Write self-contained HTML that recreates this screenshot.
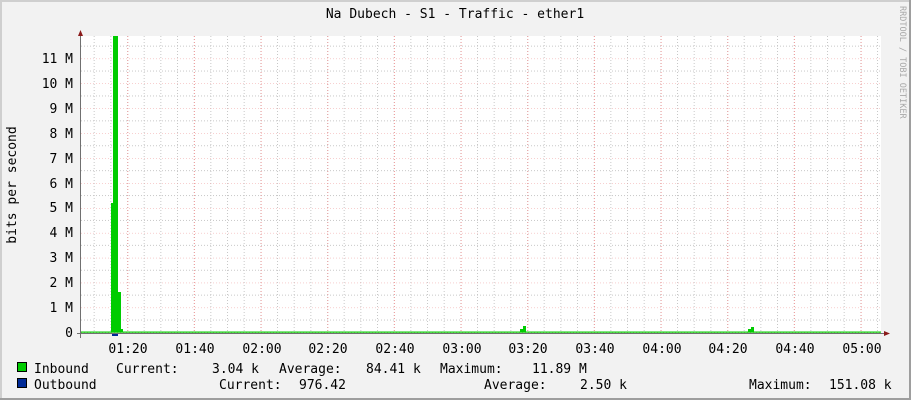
<!DOCTYPE html>
<html><head><meta charset="utf-8"><style>
html,body{margin:0;padding:0;background:#f2f2f2}
svg{display:block}
text{font-family:"DejaVu Sans Mono","Liberation Mono",monospace;font-size:13px;fill:#000}
</style></head><body>
<svg width="911" height="400" xmlns="http://www.w3.org/2000/svg">
<defs>
<pattern id="vg" patternUnits="userSpaceOnUse" x="93.67" y="0" width="16.667" height="400"><line x1="0.5" y1="0" x2="0.5" y2="400" stroke="#c8c8c8" stroke-dasharray="1,2"/></pattern>
<pattern id="vr" patternUnits="userSpaceOnUse" x="127.33" y="0" width="66.667" height="400"><line x1="0.5" y1="0" x2="0.5" y2="400" stroke="#f0a0a0" stroke-dasharray="1,2"/></pattern>
<pattern id="hg" patternUnits="userSpaceOnUse" x="0" y="332.5" width="900" height="24.9"><line x1="0" y1="12.45" x2="900" y2="12.45" stroke="#c8c8c8" stroke-dasharray="1,2"/></pattern>
<pattern id="hr" patternUnits="userSpaceOnUse" x="0" y="332.5" width="900" height="24.9"><line x1="0" y1="0" x2="900" y2="0" stroke="#f0a0a0" stroke-dasharray="1,2"/></pattern>
</defs>
<rect x="0" y="0" width="911" height="400" fill="#f2f2f2"/>
<rect x="0" y="0" width="911" height="2" fill="#cfcfcf"/>
<rect x="0" y="0" width="2" height="400" fill="#cfcfcf"/>
<rect x="909" y="0" width="2" height="400" fill="#9e9e9e"/>
<rect x="0" y="398" width="911" height="2" fill="#9e9e9e"/>
<rect x="81" y="36" width="800" height="297" fill="#fff"/>
<rect x="81" y="36" width="800" height="297" fill="url(#vg)"/>
<rect x="81" y="36" width="800" height="297" fill="url(#hg)"/>
<rect x="81" y="36" width="800" height="297" fill="url(#vr)"/>
<rect x="81" y="36" width="800" height="297" fill="url(#hr)"/>
<rect x="111" y="203" width="2" height="129" fill="#00cc00"/>
<rect x="113" y="36" width="2" height="296" fill="#00cc00"/>
<rect x="115" y="36" width="3" height="296" fill="#00cc00"/>
<rect x="118" y="292" width="3" height="40" fill="#00cc00"/>
<rect x="121" y="329" width="2" height="3" fill="#00cc00"/>
<rect x="520" y="329" width="3" height="3" fill="#00cc00"/>
<rect x="523" y="326" width="3" height="6" fill="#00cc00"/>
<rect x="748" y="329" width="3" height="3" fill="#00cc00"/>
<rect x="751" y="327" width="3" height="5" fill="#00cc00"/>
<rect x="81" y="331.5" width="800" height="1.2" fill="#00cc00"/>
<rect x="112" y="333" width="6" height="3" fill="#002a97"/>
<line x1="80.5" y1="33" x2="80.5" y2="338" stroke="#707070"/>
<line x1="77" y1="333.5" x2="885" y2="333.5" stroke="#707070"/>
<polygon points="78,36 83,36 80.5,30" fill="#8b1a1a"/>
<polygon points="884,331 884,336 890,333.5" fill="#8b1a1a"/>
<g text-anchor="end">
<text x="73" y="63">11 M</text><text x="73" y="88">10 M</text><text x="73" y="113">9 M</text>
<text x="73" y="138">8 M</text><text x="73" y="163">7 M</text><text x="73" y="188">6 M</text>
<text x="73" y="212">5 M</text><text x="73" y="237">4 M</text><text x="73" y="262">3 M</text>
<text x="73" y="287">2 M</text><text x="73" y="312">1 M</text><text x="73" y="337">0</text>
</g>
<g text-anchor="middle">
<text x="128" y="353">01:20</text><text x="195" y="353">01:40</text><text x="262" y="353">02:00</text>
<text x="328" y="353">02:20</text><text x="395" y="353">02:40</text><text x="462" y="353">03:00</text>
<text x="528" y="353">03:20</text><text x="595" y="353">03:40</text><text x="662" y="353">04:00</text>
<text x="728" y="353">04:20</text><text x="795" y="353">04:40</text><text x="862" y="353">05:00</text>
</g>
<text x="455" y="18" text-anchor="middle">Na Dubech - S1 - Traffic - ether1</text>
<text transform="translate(16,185) rotate(-90)" text-anchor="middle">bits per second</text>
<text transform="translate(900,6) rotate(90)" style="font-size:8.5px;fill:#a8a8a8">RRDTOOL / TOBI OETIKER</text>
<rect x="17.5" y="362.5" width="9" height="9" fill="#00cc00" stroke="#000"/>
<rect x="17.5" y="378.5" width="9" height="9" fill="#002a97" stroke="#000"/>
<text x="34" y="373">Inbound</text>
<text x="116" y="373">Current:</text>
<text x="212" y="373">3.04 k</text>
<text x="279" y="373">Average:</text>
<text x="366" y="373">84.41 k</text>
<text x="440" y="373">Maximum:</text>
<text x="532" y="373">11.89 M</text>
<text x="34" y="389">Outbound</text>
<text x="219" y="389">Current:</text>
<text x="299" y="389">976.42</text>
<text x="484" y="389">Average:</text>
<text x="580" y="389">2.50 k</text>
<text x="749" y="389">Maximum:</text>
<text x="829" y="389">151.08 k</text>
</svg>
</body></html>
